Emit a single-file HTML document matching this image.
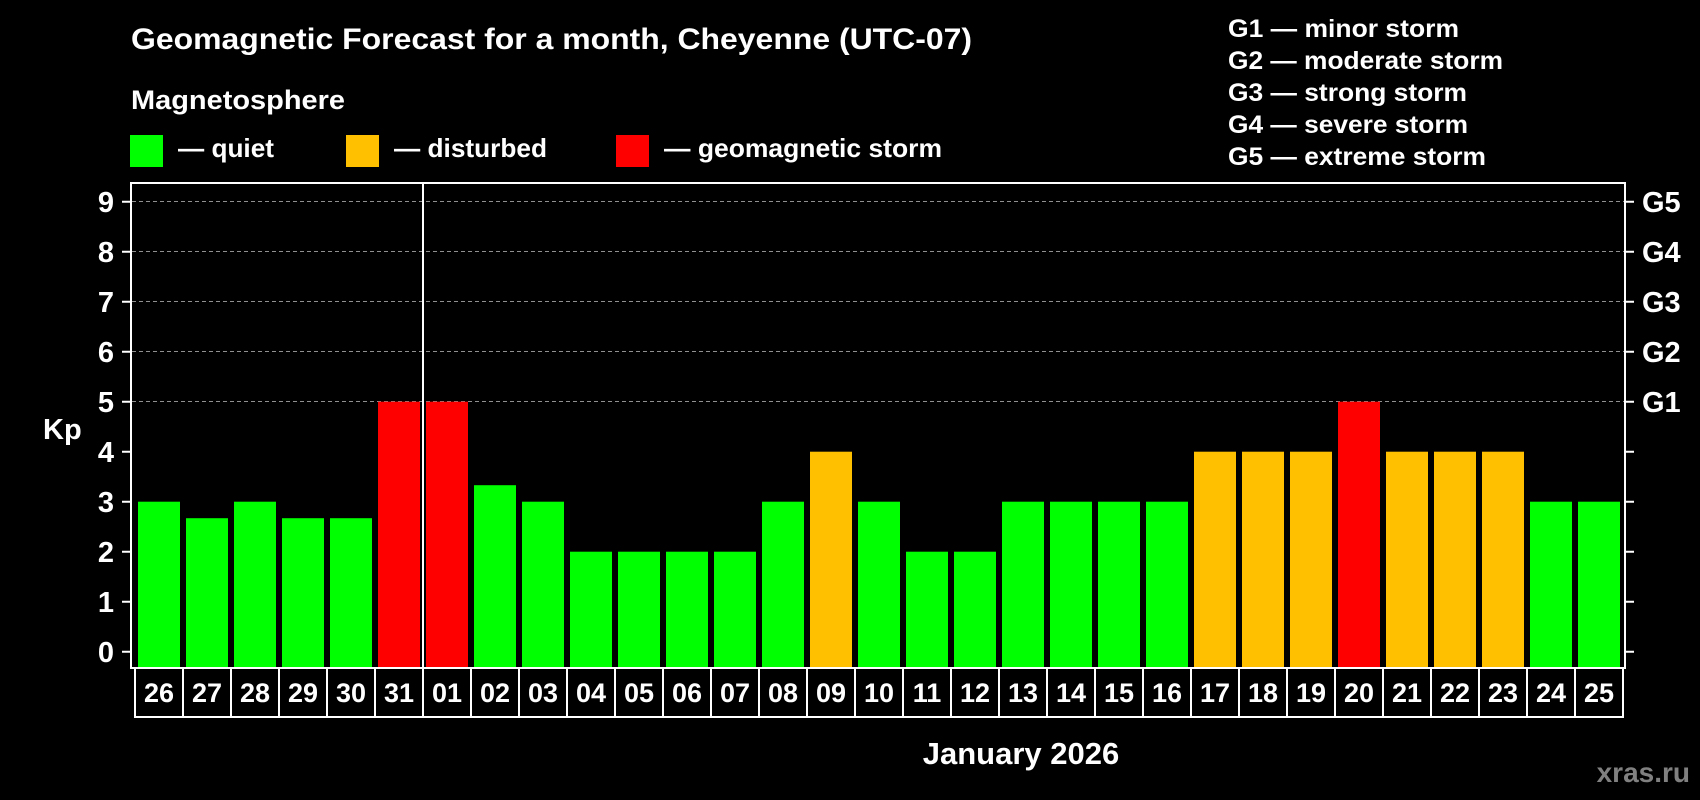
<!DOCTYPE html>
<html><head><meta charset="utf-8"><style>
html,body{margin:0;padding:0;background:#000;width:1700px;height:800px;overflow:hidden}
svg{display:block}
text{font-family:"Liberation Sans",Arial,sans-serif;font-weight:bold;fill:#fff}
</style></head><body>
<svg width="1700" height="800" viewBox="0 0 1700 800" xmlns="http://www.w3.org/2000/svg">
<rect width="1700" height="800" fill="#000"/>
<text x="131" y="49" font-size="30" textLength="841" lengthAdjust="spacingAndGlyphs">Geomagnetic Forecast for a month, Cheyenne (UTC-07)</text>
<text x="131" y="109" font-size="27" textLength="214" lengthAdjust="spacingAndGlyphs">Magnetosphere</text>
<rect x="130" y="135" width="33" height="32" fill="#00ff00"/>
<text x="178" y="157" font-size="26" textLength="96" lengthAdjust="spacingAndGlyphs">— quiet</text>
<rect x="346" y="135" width="33" height="32" fill="#ffc000"/>
<text x="394" y="157" font-size="26" textLength="153" lengthAdjust="spacingAndGlyphs">— disturbed</text>
<rect x="616" y="135" width="33" height="32" fill="#ff0000"/>
<text x="664" y="157" font-size="26" textLength="278" lengthAdjust="spacingAndGlyphs">— geomagnetic storm</text>
<g font-size="25">
<text x="1228" y="37" textLength="231" lengthAdjust="spacingAndGlyphs">G1 — minor storm</text>
<text x="1228" y="69" textLength="275" lengthAdjust="spacingAndGlyphs">G2 — moderate storm</text>
<text x="1228" y="101" textLength="239" lengthAdjust="spacingAndGlyphs">G3 — strong storm</text>
<text x="1228" y="133" textLength="240" lengthAdjust="spacingAndGlyphs">G4 — severe storm</text>
<text x="1228" y="165" textLength="258" lengthAdjust="spacingAndGlyphs">G5 — extreme storm</text>
</g>
<g stroke="#909090" stroke-width="1" stroke-dasharray="4,3">
<line x1="132" x2="1624" y1="201.5" y2="201.5"/>
<line x1="132" x2="1624" y1="251.5" y2="251.5"/>
<line x1="132" x2="1624" y1="301.5" y2="301.5"/>
<line x1="132" x2="1624" y1="351.5" y2="351.5"/>
<line x1="132" x2="1624" y1="401.5" y2="401.5"/>
</g>
<g>
<rect x="138" y="501.7" width="42" height="166.3" fill="#00ff00"/>
<rect x="186" y="518.2" width="42" height="149.8" fill="#00ff00"/>
<rect x="234" y="501.7" width="42" height="166.3" fill="#00ff00"/>
<rect x="282" y="518.2" width="42" height="149.8" fill="#00ff00"/>
<rect x="330" y="518.2" width="42" height="149.8" fill="#00ff00"/>
<rect x="378" y="401.7" width="42" height="266.3" fill="#ff0000"/>
<rect x="426" y="401.7" width="42" height="266.3" fill="#ff0000"/>
<rect x="474" y="485.2" width="42" height="182.8" fill="#00ff00"/>
<rect x="522" y="501.7" width="42" height="166.3" fill="#00ff00"/>
<rect x="570" y="551.7" width="42" height="116.3" fill="#00ff00"/>
<rect x="618" y="551.7" width="42" height="116.3" fill="#00ff00"/>
<rect x="666" y="551.7" width="42" height="116.3" fill="#00ff00"/>
<rect x="714" y="551.7" width="42" height="116.3" fill="#00ff00"/>
<rect x="762" y="501.7" width="42" height="166.3" fill="#00ff00"/>
<rect x="810" y="451.7" width="42" height="216.3" fill="#ffc000"/>
<rect x="858" y="501.7" width="42" height="166.3" fill="#00ff00"/>
<rect x="906" y="551.7" width="42" height="116.3" fill="#00ff00"/>
<rect x="954" y="551.7" width="42" height="116.3" fill="#00ff00"/>
<rect x="1002" y="501.7" width="42" height="166.3" fill="#00ff00"/>
<rect x="1050" y="501.7" width="42" height="166.3" fill="#00ff00"/>
<rect x="1098" y="501.7" width="42" height="166.3" fill="#00ff00"/>
<rect x="1146" y="501.7" width="42" height="166.3" fill="#00ff00"/>
<rect x="1194" y="451.7" width="42" height="216.3" fill="#ffc000"/>
<rect x="1242" y="451.7" width="42" height="216.3" fill="#ffc000"/>
<rect x="1290" y="451.7" width="42" height="216.3" fill="#ffc000"/>
<rect x="1338" y="401.7" width="42" height="266.3" fill="#ff0000"/>
<rect x="1386" y="451.7" width="42" height="216.3" fill="#ffc000"/>
<rect x="1434" y="451.7" width="42" height="216.3" fill="#ffc000"/>
<rect x="1482" y="451.7" width="42" height="216.3" fill="#ffc000"/>
<rect x="1530" y="501.7" width="42" height="166.3" fill="#00ff00"/>
<rect x="1578" y="501.7" width="42" height="166.3" fill="#00ff00"/>
</g>
<rect x="131" y="183" width="1494" height="485" fill="none" stroke="#fff" stroke-width="2"/>
<line x1="423" x2="423" y1="183" y2="668" stroke="#fff" stroke-width="2"/>
<g stroke="#fff" stroke-width="2" fill="none">
<rect x="135" y="668" width="1488" height="49"/>
<path d="M183 668V717M231 668V717M279 668V717M327 668V717M375 668V717M423 668V717M471 668V717M519 668V717M567 668V717M615 668V717M663 668V717M711 668V717M759 668V717M807 668V717M855 668V717M903 668V717M951 668V717M999 668V717M1047 668V717M1095 668V717M1143 668V717M1191 668V717M1239 668V717M1287 668V717M1335 668V717M1383 668V717M1431 668V717M1479 668V717M1527 668V717M1575 668V717"/>
<path d="M122 651.7H131M122 601.7H131M122 551.7H131M122 501.7H131M122 451.7H131M122 401.7H131M122 351.7H131M122 301.7H131M122 251.7H131M122 201.7H131"/>
<path d="M1625 651.7H1634M1625 601.7H1634M1625 551.7H1634M1625 501.7H1634M1625 451.7H1634M1625 401.7H1634M1625 351.7H1634M1625 301.7H1634M1625 251.7H1634M1625 201.7H1634"/>
</g>
<g font-size="29" text-anchor="middle">
<text x="106" y="662">0</text><text x="106" y="612">1</text><text x="106" y="562">2</text><text x="106" y="512">3</text><text x="106" y="462">4</text><text x="106" y="412">5</text><text x="106" y="362">6</text><text x="106" y="312">7</text><text x="106" y="262">8</text><text x="106" y="212">9</text>
</g>
<g font-size="29">
<text x="1642" y="212">G5</text>
<text x="1642" y="262">G4</text>
<text x="1642" y="312">G3</text>
<text x="1642" y="362">G2</text>
<text x="1642" y="412">G1</text>
</g>
<text x="43" y="439" font-size="29">Kp</text>
<g font-size="27" text-anchor="middle">
<text x="159" y="702">26</text><text x="207" y="702">27</text><text x="255" y="702">28</text><text x="303" y="702">29</text><text x="351" y="702">30</text><text x="399" y="702">31</text><text x="447" y="702">01</text><text x="495" y="702">02</text><text x="543" y="702">03</text><text x="591" y="702">04</text><text x="639" y="702">05</text><text x="687" y="702">06</text><text x="735" y="702">07</text><text x="783" y="702">08</text><text x="831" y="702">09</text><text x="879" y="702">10</text><text x="927" y="702">11</text><text x="975" y="702">12</text><text x="1023" y="702">13</text><text x="1071" y="702">14</text><text x="1119" y="702">15</text><text x="1167" y="702">16</text><text x="1215" y="702">17</text><text x="1263" y="702">18</text><text x="1311" y="702">19</text><text x="1359" y="702">20</text><text x="1407" y="702">21</text><text x="1455" y="702">22</text><text x="1503" y="702">23</text><text x="1551" y="702">24</text><text x="1599" y="702">25</text>
</g>
<text x="1021" y="764" font-size="31" text-anchor="middle">January 2026</text>
<text x="1690" y="782" font-size="28" text-anchor="end" style="fill:#808080">xras.ru</text>
</svg>
</body></html>
